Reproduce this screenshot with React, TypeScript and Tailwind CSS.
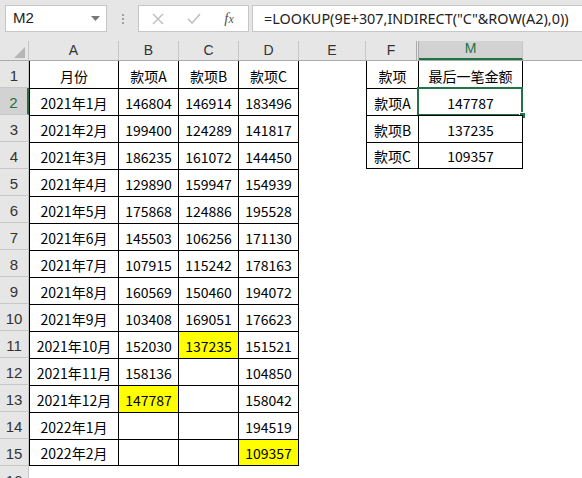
import React from "react";

const COLS = [
  { key: "A", w: "w-[90px]" },
  { key: "B", w: "w-[60px]" },
  { key: "C", w: "w-[60px]" },
  { key: "D", w: "w-[60px]" },
  { key: "E", w: "w-[67px]" },
  { key: "F", w: "w-[53px]" },
  { key: "M", w: "w-[104px]" },
];

type Row = { a: string; b: string; c: string; d: string; f?: string; m?: string; yb?: boolean; yc?: boolean; yd?: boolean };

const rows: Row[] = [
  { a: "月份", b: "款项A", c: "款项B", d: "款项C", f: "款项", m: "最后一笔金额" },
  { a: "2021年1月", b: "146804", c: "146914", d: "183496", f: "款项A", m: "147787" },
  { a: "2021年2月", b: "199400", c: "124289", d: "141817", f: "款项B", m: "137235" },
  { a: "2021年3月", b: "186235", c: "161072", d: "144450", f: "款项C", m: "109357" },
  { a: "2021年4月", b: "129890", c: "159947", d: "154939" },
  { a: "2021年5月", b: "175868", c: "124886", d: "195528" },
  { a: "2021年6月", b: "145503", c: "106256", d: "171130" },
  { a: "2021年7月", b: "107915", c: "115242", d: "178163" },
  { a: "2021年8月", b: "160569", c: "150460", d: "194072" },
  { a: "2021年9月", b: "103408", c: "169051", d: "176623" },
  { a: "2021年10月", b: "152030", c: "137235", d: "151521", yc: true },
  { a: "2021年11月", b: "158136", c: "", d: "104850" },
  { a: "2021年12月", b: "147787", c: "", d: "158042", yb: true },
  { a: "2022年1月", b: "", c: "", d: "194519" },
  { a: "2022年2月", b: "", c: "", d: "109357", yd: true },
];

const cellFont = { fontFamily: '"Noto Sans CJK SC", "Noto Sans", sans-serif' };

function Cell({
  w,
  text,
  border,
  first,
  top,
  last,
  yellow,
  children,
}: {
  w: string;
  text?: string;
  border?: boolean;
  first?: boolean;
  top?: boolean;
  last?: boolean;
  yellow?: boolean;
  children?: React.ReactNode;
}) {
  return (
    <div
      className={
        w +
        " h-full shrink-0 relative flex items-end justify-center pb-[3px] text-[14px] leading-[18px] text-black " +
        (border ? "border-black " : "") +
        (border ? "border-r " : "") +
        (border && first ? "border-l " : "") +
        (border && top ? "border-t " : "") +
        (border && last ? "border-b " : "") +
        (yellow ? "bg-[#ffff00]" : "bg-white")
      }
      style={cellFont}
    >
      {text}
      {children}
    </div>
  );
}

export default function App() {
  return (
    <div
      className="w-[582px] h-[478px] overflow-hidden bg-[#e6e6e6] relative"
      style={{ fontFamily: '"Noto Sans", "Noto Sans CJK SC", sans-serif' }}
    >
      {/* Formula bar */}
      <div className="h-[41px] flex items-start pt-[5px] pl-[5px]">
        <div className="w-[102px] h-[27px] bg-white border border-[#c6c6c6] flex items-center pl-[7px] pr-[6px] justify-between">
          <span className="text-[15px] text-[#222]" style={{ fontFamily: '"Liberation Sans", sans-serif' }}>M2</span>
          <svg width="9" height="5" viewBox="0 0 9 5"><polygon points="0,0 9,0 4.5,5" fill="#777" /></svg>
        </div>
        <div className="w-[31px] h-[27px] flex flex-col items-center justify-center gap-[2px]">
          <span className="w-[2px] h-[2px] bg-[#a0a0a0]" />
          <span className="w-[2px] h-[2px] bg-[#a0a0a0]" />
          <span className="w-[2px] h-[2px] bg-[#a0a0a0]" />
        </div>
        <div className="w-[111px] h-[27px] bg-white border border-[#c6c6c6] flex items-center">
          <div className="w-[38px] flex justify-center">
            <svg width="12" height="12" viewBox="0 0 12 12"><path d="M1 1 L11 11 M11 1 L1 11" stroke="#bdbdbd" strokeWidth="1.4" /></svg>
          </div>
          <div className="w-[34px] flex justify-center">
            <svg width="14" height="11" viewBox="0 0 14 11"><path d="M1 6 L5 10 L13 1" stroke="#bdbdbd" strokeWidth="1.5" fill="none" /></svg>
          </div>
          <div className="w-[36px] flex justify-center">
            <span className="italic text-[15px] text-[#555]" style={{ fontFamily: '"Liberation Serif", serif' }}>
              f<span className="text-[12px]">x</span>
            </span>
          </div>
        </div>
        <div className="w-[3px]" />
        <div className="flex-1 h-[27px] bg-white border border-[#c6c6c6] border-r-0 flex items-center pl-[11px]">
          <span className="text-[14.4px] text-[#222] whitespace-nowrap" style={{ fontFamily: '"Noto Sans", sans-serif' }}>
            =LOOKUP(9E+307,INDIRECT("C"&amp;ROW(A2),0))
          </span>
        </div>
      </div>

      {/* Column headers */}
      <div className="h-[20px] flex border-b border-[#ababab]">
        <div className="w-[29px] shrink-0 h-full border-r border-[#c6c6c6] flex items-end justify-end pr-[3px] pb-[2px]">
          <svg width="11" height="11" viewBox="0 0 11 11"><polygon points="11,0 11,11 0,11" fill="#b5b5b5" /></svg>
        </div>
        {COLS.map((c) => (
          <div
            key={c.key}
            className={
              c.w +
              " shrink-0 h-full flex items-end justify-center pb-[1px] text-[14px] leading-[18px] " +
              (c.key === "M"
                ? "bg-[#d2d2d2] text-[#217346] border-r border-[#c6c6c6] border-b-2 border-b-[#217346]"
                : c.key === "F"
                ? "text-[#333] border-r-[3px] border-double border-[#ababab]"
                : "text-[#333] border-r border-[#c6c6c6]")
            }
            style={{ fontFamily: '"Liberation Sans", sans-serif' }}
          >
            {c.key}
          </div>
        ))}
        <div className="flex-1 h-full" />
      </div>

      {/* Rows */}
      {[...rows, null, null].map((r, i) => {
        const n = i + 1;
        const selected = n === 2;
        const last = n === 15;
        const inFM = n <= 4;
        return (
          <div key={n} className="h-[27px] flex">
            <div
              className={
                "w-[29px] shrink-0 h-full flex items-end justify-center pb-[2px] text-[15px] leading-[18px] border-b border-[#c8c8c8] " +
                (selected
                  ? "bg-[#d2d2d2] text-[#217346] border-r-2 border-r-[#217346]"
                  : "bg-[#e6e6e6] text-[#333] border-r border-r-[#c6c6c6]")
              }
              style={{ fontFamily: '"Liberation Sans", sans-serif' }}
            >
              {n}
            </div>
            {r ? (
              <>
                <Cell w="w-[90px]" text={r.a} border first top={n > 1} last={last} />
                <Cell w="w-[60px]" text={r.b} border top={n > 1} last={last} yellow={r.yb} />
                <Cell w="w-[60px]" text={r.c} border top={n > 1} last={last} yellow={r.yc} />
                <Cell w="w-[60px]" text={r.d} border top={n > 1} last={last} yellow={r.yd} />
                <Cell w="w-[67px]" />
                {inFM ? (
                  <>
                    <Cell w="w-[53px]" text={r.f} border first top={n > 1} last={n === 4} />
                    <Cell w="w-[104px]" text={r.m} border top={n > 1} last={n === 4}>
                      {n === 2 && (
                        <>
                          <div className="absolute left-[-2px] top-[-2px] w-[106px] h-[29px] border-2 border-[#217346]" />
                          <div className="absolute right-[-4px] bottom-[-4px] w-[7px] h-[7px] bg-[#217346] border border-white" />
                        </>
                      )}
                    </Cell>
                  </>
                ) : (
                  <>
                    <Cell w="w-[53px]" />
                    <Cell w="w-[104px]" />
                  </>
                )}
                <div className="flex-1 h-full bg-white" />
              </>
            ) : (
              <div className="flex-1 h-full bg-white" />
            )}
          </div>
        );
      })}
    </div>
  );
}
